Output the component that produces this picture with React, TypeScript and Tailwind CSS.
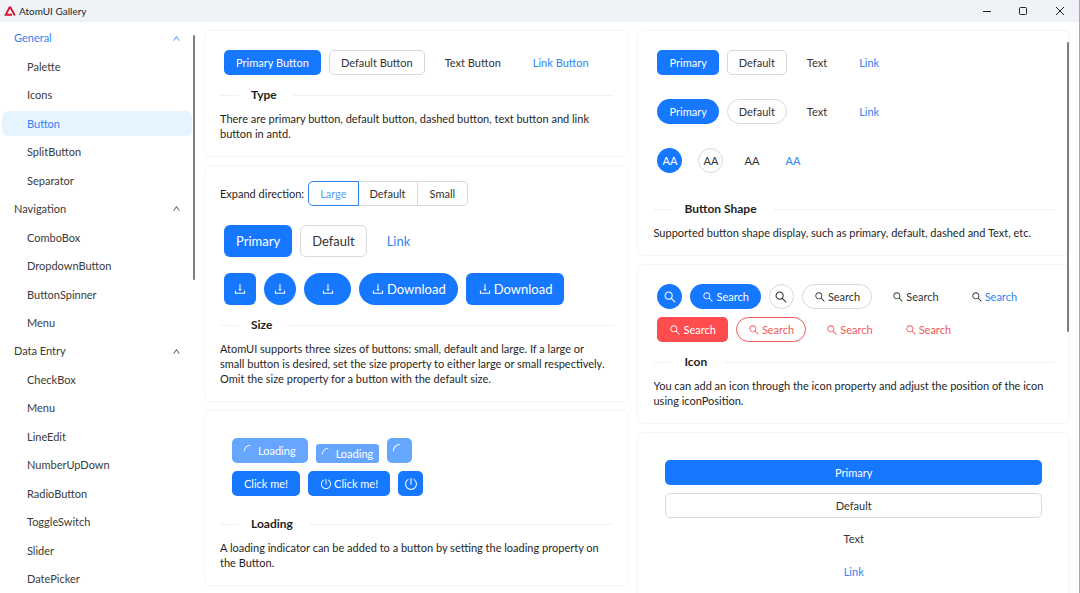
import type { ReactNode } from "react";
import clsx from "clsx";
import {
  AiOutlineDownload,
  AiOutlineLoading,
  AiOutlinePoweroff,
  AiOutlineSearch,
  AiOutlineUp,
} from "react-icons/ai";

const menu = [
  { title: "General", items: ["Palette", "Icons", "Button", "SplitButton", "Separator"] },
  { title: "Navigation", items: ["ComboBox", "DropdownButton", "ButtonSpinner", "Menu"] },
  {
    title: "Data Entry",
    items: [
      "CheckBox",
      "Menu",
      "LineEdit",
      "NumberUpDown",
      "RadioButton",
      "ToggleSwitch",
      "Slider",
      "DatePicker",
    ],
  },
];

type BtnProps = {
  kind?: "primary" | "default" | "text" | "link" | "danger" | "dangerOutline" | "dangerText";
  size?: "small" | "middle" | "large";
  shape?: "default" | "round" | "circle" | "square";
  icon?: ReactNode;
  label?: string;
  loading?: boolean;
  className?: string;
  children?: ReactNode;
};

const kinds = {
  primary: "bg-[#1677ff] text-white",
  default: "border border-[#d9d9d9] bg-white text-[#333333]",
  text: "text-[#333333]",
  link: "text-[#3282f6]",
  danger: "bg-[#ff4d4f] text-white",
  dangerOutline: "border border-[#f0595c] bg-white text-[#f0595c]",
  dangerText: "text-[#f0595c]",
};

const sizes = {
  small: "h-[19px] text-[11px]",
  middle: "h-[25px] text-[11px]",
  large: "h-8 text-[13px]",
};

function Btn({
  kind = "default",
  size = "middle",
  shape = "default",
  icon,
  label,
  loading,
  className,
  children,
}: BtnProps) {
  const iconOnly = shape === "circle" || shape === "square";
  const bordered = kind === "default" || kind === "dangerOutline";
  const cls = clsx(
    "inline-flex shrink-0 items-center justify-center gap-[2px] whitespace-nowrap",
    kinds[kind],
    sizes[size],
    iconOnly && (size === "large" ? "w-8" : "w-[25px]"),
    !iconOnly && (size === "small" ? "px-[6px]" : bordered ? "px-[11px]" : "px-3"),
    shape === "round" || shape === "circle"
      ? "rounded-full"
      : size === "small"
        ? "rounded-[3px]"
        : size === "large"
          ? "rounded-md"
          : "rounded-[5px]",
    loading && "opacity-65",
    className
  );
  const text = children && <span className="pt-[2px]">{children}</span>;

  if (kind === "link") {
    return (
      <a href="#" className={cls}>
        {icon}
        {text}
      </a>
    );
  }
  return (
    <button type="button" aria-label={label} disabled={loading} className={cls}>
      {icon}
      {text}
    </button>
  );
}

function Card({ title, text, children }: { title: string; text: string; children: ReactNode }) {
  return (
    <section className="rounded-md border border-[#f5f5f5] bg-white p-[15px]">
      {children}
      <div className="my-2 flex items-center">
        <span className="h-px w-[18px] bg-[#f2f2f2]" />
        <h2 className="ml-[13px] mr-4 text-[12px] leading-4 font-bold">{title}</h2>
        <span className="h-px flex-1 bg-[#f2f2f2]" />
      </div>
      <p className="pr-[6px] text-[11px] leading-[15px]">{text}</p>
    </section>
  );
}

function Logo() {
  return (
    <svg viewBox="0 0 24 20" className="h-[10px] w-3" fill="none" stroke="#d9142b" strokeWidth="3.6" aria-hidden="true">
      <path d="M16 17.5H3.5L11 3h2l8.5 16" />
    </svg>
  );
}

function TitleBar() {
  return (
    <header className="flex h-[22px] shrink-0 items-center gap-[3px] bg-[#eff3f8] pl-1">
      <Logo />
      <h1 className="flex-1 text-[10px] leading-4">AtomUI Gallery</h1>
      <div className="flex text-[#222222]">
        <button type="button" aria-label="Minimize" className="flex w-9 justify-center">
          <svg viewBox="0 0 10 10" className="size-[10px]" stroke="currentColor">
            <path d="M1 5.5h8" />
          </svg>
        </button>
        <button type="button" aria-label="Maximize" className="flex w-9 justify-center">
          <svg viewBox="0 0 10 10" className="size-[10px]" stroke="currentColor" fill="none">
            <rect x="1.5" y="1.5" width="7" height="7" rx="1" />
          </svg>
        </button>
        <button type="button" aria-label="Close" className="flex w-[38px] justify-center">
          <svg viewBox="0 0 10 10" className="size-[10px]" stroke="currentColor">
            <path d="M1 1l8 8M9 1L1 9" />
          </svg>
        </button>
      </div>
    </header>
  );
}

function Sidebar() {
  return (
    <aside className="relative w-[196px] shrink-0 pt-[2px]">
      <nav className="grid h-full auto-rows-fr items-center pr-1 pl-[2px] text-[11px] text-[#3a3a3a]">
        {menu.map((group, g) => [
          <button
            key={group.title}
            type="button"
            className={clsx(
              "flex h-[25px] items-center justify-between pr-[11px] pl-3",
              g === 0 && "text-[#3282f6]"
            )}
          >
            {group.title}
            <AiOutlineUp className="size-[9px]" />
          </button>,
          ...group.items.map((item) => (
            <a
              key={group.title + item}
              href="#"
              className={clsx(
                "flex h-[25px] items-center rounded-md pt-px pl-[25px]",
                item === "Button" && "bg-[#e6f4ff] text-[#3282f6]"
              )}
            >
              {item}
            </a>
          )),
        ])}
      </nav>
      {/* scroll thumb */}
      <div className="absolute top-[13px] right-[1px] h-[245px] w-[2px] rounded-full bg-[#7f7f7f]" />
    </aside>
  );
}

function SizePicker() {
  return (
    <div className="mb-[7px] flex items-center gap-1 text-[11px]" role="radiogroup" aria-label="Expand direction">
      <span className="pt-[2px]">Expand direction:</span>
      <div className="flex text-[#333333]">
        {["Large", "Default", "Small"].map((name, i) => (
          <label
            key={name}
            className={clsx(
              "flex h-[25px] items-center border pt-[2px]",
              i === 0 && "rounded-l-[5px] border-[#3282f6] px-[11px] text-[#5b9bf8]",
              i === 1 && "border-l-0 border-[#d9d9d9] px-[11px]",
              i === 2 && "rounded-r-[5px] border-l-0 border-[#d9d9d9] px-3"
            )}
          >
            <input type="radio" name="size" defaultChecked={i === 0} className="sr-only" />
            {name}
          </label>
        ))}
      </div>
    </div>
  );
}

export default function App() {
  const search = <AiOutlineSearch className="size-3" />;
  const searchLg = <AiOutlineSearch className="size-[14px]" />;
  const download = <AiOutlineDownload className="size-[14px]" />;

  return (
    <div className="flex h-screen flex-col overflow-hidden border-r border-[#a8a8a8] bg-white font-[Lato,sans-serif] text-[#1f1f1f]">
      <TitleBar />
      <div className="flex min-h-0 flex-1">
        <Sidebar />

        <main className="relative grid flex-1 grid-cols-[minmax(0,425fr)_minmax(0,432fr)] gap-2 overflow-hidden pt-2 pr-[9px] pl-2">
          {/* LEFT COLUMN */}
          <div className="flex flex-col gap-2">
            <Card
              title="Type"
              text="There are primary button, default button, dashed button, text button and link button in antd."
            >
              <div className="flex gap-2 p-1">
                <Btn kind="primary">Primary Button</Btn>
                <Btn>Default Button</Btn>
                <Btn kind="text">Text Button</Btn>
                <Btn kind="link">Link Button</Btn>
              </div>
            </Card>

            <Card
              title="Size"
              text="AtomUI supports three sizes of buttons: small, default and large. If a large or small button is desired, set the size property to either large or small respectively. Omit the size property for a button with the default size."
            >
              <div className="flex flex-col gap-2">
                <SizePicker />
                <div className="flex gap-2 p-1">
                  <Btn kind="primary" size="large">Primary</Btn>
                  <Btn size="large">Default</Btn>
                  <Btn kind="link" size="large">Link</Btn>
                </div>
                <div className="flex gap-2 p-1">
                  <Btn kind="primary" size="large" shape="square" icon={download} label="Download" />
                  <Btn kind="primary" size="large" shape="circle" icon={download} label="Download" />
                  <Btn kind="primary" size="large" shape="round" icon={download} label="Download" className="w-[47px]" />
                  <Btn kind="primary" size="large" shape="round" icon={download}>Download</Btn>
                  <Btn kind="primary" size="large" icon={download}>Download</Btn>
                </div>
              </div>
            </Card>

            <Card
              title="Loading"
              text="A loading indicator can be added to a button by setting the loading property on the Button."
            >
              <div className="flex flex-col gap-2 p-3">
                <div className="flex items-end gap-2">
                  <Btn kind="primary" loading icon={<AiOutlineLoading className="size-3 -rotate-90" />}>
                    Loading
                  </Btn>
                  <Btn kind="primary" size="small" loading icon={<AiOutlineLoading className="size-3 -rotate-90" />}>
                    Loading
                  </Btn>
                  <Btn
                    kind="primary"
                    shape="square"
                    loading
                    label="Loading"
                    icon={<AiOutlineLoading className="size-[14px] -rotate-90" />}
                  />
                </div>
                <div className="flex gap-2">
                  <Btn kind="primary">Click me!</Btn>
                  <Btn kind="primary" icon={<AiOutlinePoweroff className="size-3" />}>Click me!</Btn>
                  <Btn kind="primary" shape="square" icon={<AiOutlinePoweroff className="size-[14px]" />} label="Power" />
                </div>
              </div>
            </Card>
          </div>

          {/* RIGHT COLUMN */}
          <div className="flex flex-col gap-2">
            <Card
              title="Button Shape"
              text="Supported button shape display, such as primary, default, dashed and Text, etc."
            >
              <div className="mb-4 flex gap-2 p-1">
                <Btn kind="primary">Primary</Btn>
                <Btn>Default</Btn>
                <Btn kind="text">Text</Btn>
                <Btn kind="link">Link</Btn>
              </div>
              <div className="mb-4 flex gap-2 p-1">
                <Btn kind="primary" shape="round">Primary</Btn>
                <Btn shape="round">Default</Btn>
                <Btn kind="text" shape="round">Text</Btn>
                <Btn kind="link" shape="round">Link</Btn>
              </div>
              <div className="mb-6 flex gap-4 p-1">
                <Btn kind="primary" shape="circle">AA</Btn>
                <Btn shape="circle">AA</Btn>
                <Btn kind="text" shape="circle">AA</Btn>
                <Btn kind="link" shape="circle">AA</Btn>
              </div>
            </Card>

            <Card
              title="Icon"
              text="You can add an icon through the icon property and adjust the position of the icon using iconPosition."
            >
              <div className="flex flex-col gap-2 p-1">
                <div className="flex gap-2">
                  <Btn kind="primary" shape="circle" icon={searchLg} label="Search" />
                  <Btn kind="primary" shape="round" icon={search}>Search</Btn>
                  <Btn shape="circle" icon={searchLg} label="Search" />
                  <Btn shape="round" icon={search} className="px-3">Search</Btn>
                  <Btn kind="text" icon={search}>Search</Btn>
                  <Btn kind="link" icon={<AiOutlineSearch className="size-3 text-[#333333]" />}>Search</Btn>
                </div>
                <div className="flex gap-2">
                  <Btn kind="danger" icon={search}>Search</Btn>
                  <Btn kind="dangerOutline" shape="round" icon={search}>Search</Btn>
                  <Btn kind="dangerText" icon={search}>Search</Btn>
                  <Btn kind="dangerText" icon={search}>Search</Btn>
                </div>
              </div>
            </Card>

            {/* block buttons, runs on below the fold */}
            <section className="flex-1 rounded-t-md border border-b-0 border-[#f5f5f5] bg-white px-[15px] pt-[15px]">
              <div className="flex flex-col gap-2 p-3 pb-0">
                <Btn kind="primary">Primary</Btn>
                <Btn>Default</Btn>
                <Btn kind="text">Text</Btn>
                <Btn kind="link">Link</Btn>
              </div>
            </section>
          </div>

          {/* scroll thumb */}
          <div className="absolute top-5 right-[10px] h-[290px] w-[2px] rounded-full bg-[#7f7f7f]" />
        </main>
      </div>
    </div>
  );
}
